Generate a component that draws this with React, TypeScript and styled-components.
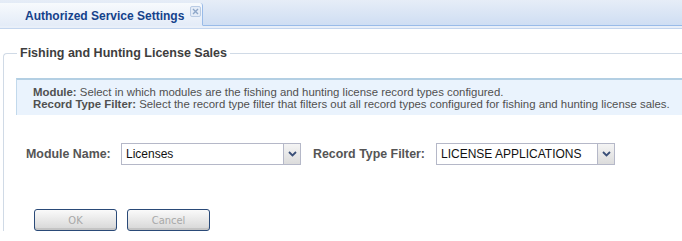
import styled, { createGlobalStyle } from 'styled-components';

const GlobalStyle = createGlobalStyle`
  html, body {
    margin: 0;
    padding: 0;
    background: #ffffff;
    font-family: 'Liberation Sans', Arial, sans-serif;
  }
`;

const Page = styled.div`
  width: 682px;
  height: 241px;
  overflow: hidden;
  background: #ffffff;
`;

const TabStrip = styled.div`
  height: 25px;
  display: flex;
  align-items: flex-end;
  background: linear-gradient(#e6edf7, #cfdef3);
  border-bottom: 1px solid #99bbe8;
`;

const TabSpacer = styled.div`
  height: 2px;
  background: #e8eff9;
  border-bottom: 1px solid #c3d5ee;
`;

const Tab = styled.div`
  height: 23px;
  width: 203px;
  box-sizing: border-box;
  padding: 0 0 0 25px;
  display: flex;
  align-items: center;
  gap: 6px;
  background: linear-gradient(#f7fafd, #e4ecf8);
  border-right: 1px solid #99bbe8;
  border-top-right-radius: 3px;
  margin-bottom: -1px;
  border-bottom: 1px solid #e4ecf8;
`;

const TabTitle = styled.span`
  font-weight: bold;
  font-size: 12px;
  white-space: nowrap;
  color: #15428b;
  margin-top: 3px;
`;

const CloseIcon = styled.span`
  width: 9px;
  height: 9px;
  margin-top: -6px;
  border: 1px solid #b9cbe4;
  border-radius: 2px;
  background: #e4ecf7;
  display: flex;
  align-items: center;
  justify-content: center;
`;

const Body = styled.div`
  padding: 17px 0 0 3px;
`;

const Fieldset = styled.fieldset`
  margin: 0;
  margin-right: -20px;
  padding: 18px 0 0 12px;
  border: 1px solid #d0dae6;
  border-right: none;
  border-bottom: none;
  border-top-left-radius: 4px;
  min-width: 0;
`;

const Legend = styled.legend`
  padding: 0 3px;
  margin-left: 1px;
  font-weight: bold;
  font-size: 12.5px;
  color: #3e3e3e;
`;

const InfoBox = styled.div`
  background: #eaf3fd;
  border-top: 2px solid #b3cfe3;
  border-left: 1px solid #c2d9ec;
  padding: 6px 0 5px 16px;
  font-size: 11.4px;
  line-height: 12px;
  color: #505050;

  strong {
    font-weight: bold;
    color: #505050;
  }
`;

const FormRow = styled.div`
  display: flex;
  align-items: center;
  margin-top: 28px;
  padding-left: 10px;
`;

const Label = styled.span<{ $width: number }>`
  width: ${p => p.$width}px;
  font-weight: bold;
  font-size: 12.4px;
  color: #555555;
`;

const Combo = styled.div<{ $width: number }>`
  display: flex;
  width: ${p => p.$width}px;
  height: 22px;
  margin-right: 12px;
`;

const ComboInput = styled.div`
  flex: 1;
  box-sizing: border-box;
  border: 1px solid #b5b8c8;
  background: #ffffff;
  padding: 3px 0 0 4px;
  font-size: 12px;
  color: #111111;
`;

const ComboTrigger = styled.div`
  width: 17px;
  box-sizing: border-box;
  border: 1px solid #b5b8c8;
  border-left: none;
  background: linear-gradient(#f4f4f4, #dcdcdc);
  display: flex;
  align-items: center;
  justify-content: center;
`;

const ButtonRow = styled.div`
  display: flex;
  gap: 10px;
  margin-top: 44px;
  padding-left: 18px;
`;

const Button = styled.button`
  width: 83px;
  height: 22px;
  box-sizing: border-box;
  border: 1px solid #2a4a78;
  border-radius: 3px;
  background: linear-gradient(#fafafa 0%, #e8e8e8 50%, #d6d6d6 100%);
  box-shadow: inset 0 -2px 0 #c4c4c4;
  font-family: 'DejaVu Sans Condensed', 'Liberation Sans', sans-serif;
  font-size: 11px;
  color: #a8a8a8;
  padding: 0;
`;

const Chevron = () => (
  <svg width="9" height="6" viewBox="0 0 9 6">
    <path d="M1 1 L4.5 4.5 L8 1" stroke="#3a4f78" strokeWidth="1.8" fill="none" />
  </svg>
);

const CloseX = () => (
  <svg width="7" height="7" viewBox="0 0 7 7">
    <path d="M1 1 L6 6 M6 1 L1 6" stroke="#8ea7c8" strokeWidth="1.4" />
  </svg>
);

const App = () => {
  return (
    <Page>
      <GlobalStyle />
      <TabStrip>
        <Tab>
          <TabTitle>Authorized Service Settings</TabTitle>
          <CloseIcon>
            <CloseX />
          </CloseIcon>
        </Tab>
      </TabStrip>
      <TabSpacer />
      <Body>
        <Fieldset>
          <Legend>Fishing and Hunting License Sales</Legend>
          <InfoBox>
            <strong>Module:</strong> Select in which modules are the fishing and hunting license record types configured.
            <br />
            <strong>Record Type Filter:</strong> Select the record type filter that filters out all record types configured for fishing and hunting license sales.
          </InfoBox>
          <FormRow>
            <Label $width={95}>Module Name:</Label>
            <Combo $width={180}>
              <ComboInput>Licenses</ComboInput>
              <ComboTrigger>
                <Chevron />
              </ComboTrigger>
            </Combo>
            <Label $width={123}>Record Type Filter:</Label>
            <Combo $width={179}>
              <ComboInput>LICENSE APPLICATIONS</ComboInput>
              <ComboTrigger>
                <Chevron />
              </ComboTrigger>
            </Combo>
          </FormRow>
          <ButtonRow>
            <Button disabled>OK</Button>
            <Button disabled>Cancel</Button>
          </ButtonRow>
        </Fieldset>
      </Body>
    </Page>
  );
};

export default App;
